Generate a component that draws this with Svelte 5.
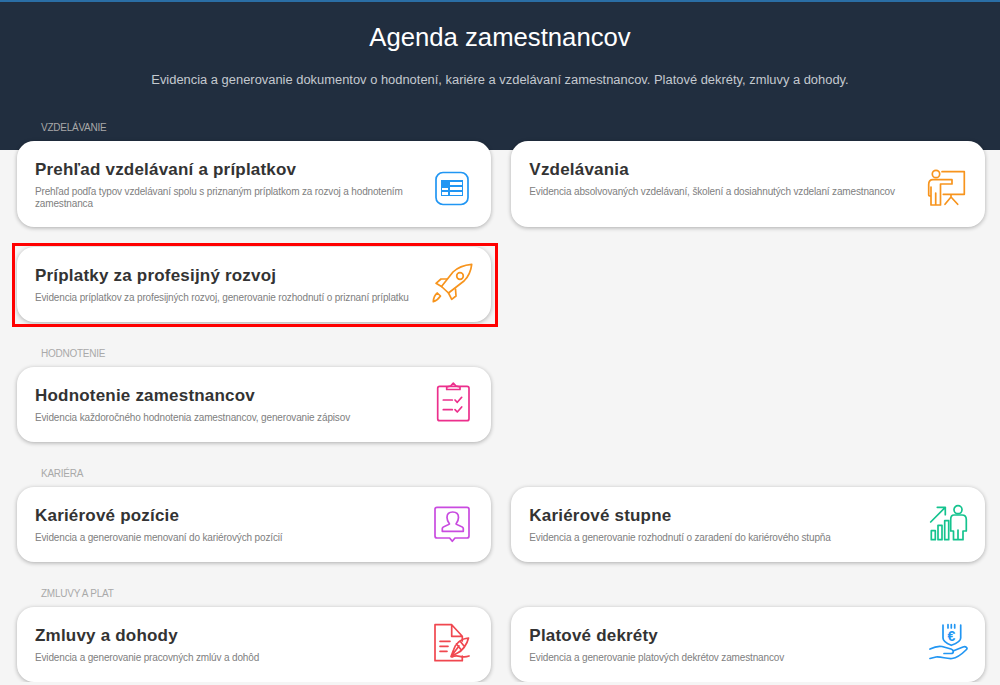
<script>
  const sections = [
    {
      label: 'VZDELÁVANIE',
      cards: [
        { title: 'Prehľad vzdelávaní a príplatkov', text: 'Prehľad podľa typov vzdelávaní spolu s priznaným príplatkom za rozvoj a hodnotením zamestnanca', icon: 'table' },
        { title: 'Vzdelávania', text: 'Evidencia absolvovaných vzdelávaní, školení a dosiahnutých vzdelaní zamestnancov', icon: 'teacher' },
        { title: 'Príplatky za profesijný rozvoj', text: 'Evidencia príplatkov za profesijných rozvoj, generovanie rozhodnutí o priznaní príplatku', icon: 'rocket', marked: true }
      ]
    },
    {
      label: 'HODNOTENIE',
      cards: [
        { title: 'Hodnotenie zamestnancov', text: 'Evidencia každoročného hodnotenia zamestnancov, generovanie zápisov', icon: 'clipboard' }
      ]
    },
    {
      label: 'KARIÉRA',
      cards: [
        { title: 'Kariérové pozície', text: 'Evidencia a generovanie menovaní do kariérových pozícií', icon: 'profile' },
        { title: 'Kariérové stupne', text: 'Evidencia a generovanie rozhodnutí o zaradení do kariérového stupňa', icon: 'growth' }
      ]
    },
    {
      label: 'ZMLUVY A PLAT',
      cards: [
        { title: 'Zmluvy a dohody', text: 'Evidencia a generovanie pracovných zmlúv a dohôd', icon: 'contract' },
        { title: 'Platové dekréty', text: 'Evidencia a generovanie platových dekrétov zamestnancov', icon: 'salary' }
      ]
    }
  ];
</script>

<header class="hero">
  <h1>Agenda zamestnancov</h1>
  <p>Evidencia a generovanie dokumentov o hodnotení, kariére a vzdelávaní zamestnancov. Platové dekréty, zmluvy a dohody.</p>
</header>

<main class="content">
  {#each sections as section}
    <section>
      <h2>{section.label}</h2>
      <div class="grid">
        {#each section.cards as card}
          <a class="card" class:marked={card.marked} href="#top">
            <div class="body">
              <h3>{card.title}</h3>
              <p>{card.text}</p>
            </div>
            <svg class="icon {card.icon}" viewBox="0 0 48 48" width="48" height="48" aria-hidden="true">
              {#if card.icon === 'table'}
                <rect x="8" y="7.5" width="32" height="32" rx="7" />
                <rect class="solid" x="13" y="15" width="22" height="16" />
                <path class="cut" d="M22 17h12v3H22zM22 22h12v3H22zM22 27h12v3H22zM14 23h6v2h-6zM14 27h6v3h-6z" />
              {:else if card.icon === 'teacher'}
                <circle cx="14" cy="9" r="3.7" />
                <path d="M20 6.7H42.3V29.3H21.3M29 29.3V32L23 39.3M29 32L35.7 39.3" />
                <path d="M30 14.7H11Q6.7 14.7 6.7 19.5V30Q6.7 31 9 31V40H18.5V19H30ZM13.7 28V40M9 22V31" />
              {:else if card.icon === 'rocket'}
                <path d="M43.7 4.3C36 5 29 8 25 12L13.5 26.5L20.5 33L36 21C40 17 43 11 43.7 4.3Z" />
                <circle cx="32" cy="16" r="3.3" />
                <path d="M18.7 19H13L8 23.3L13.5 26.5M27.5 29L28 36L23.7 39.3L20.5 33" />
                <path d="M5.3 41.7C5.5 38 6 35.5 9.3 33L12.5 36C10 39.5 8 41 5.3 41.7Z" />
              {:else if card.icon === 'clipboard'}
                <rect x="9.7" y="6.3" width="31.3" height="34.4" rx="2" />
                <path d="M18.7 9.5H32V7L28 6L25.3 3.2L22.6 6L18.7 7Z" />
                <path d="M15.3 20H24.3M15.3 29.7H24.3M27 20L29.3 22.3L33.7 17.3M27 29.7L29.3 32L33.7 27" />
              {:else if card.icon === 'profile'}
                <path d="M9 7.3H39Q41 7.3 41 9.3V36Q41 38 39 38H27L24.3 41.3L21.6 38H9Q7 38 7 36V9.3Q7 7.3 9 7.3Z" />
                <path d="M14.3 31.3V28.5C14.3 26 20 25.5 21.5 24C20 22 19 20 19 17.5C19 14 21 12 24.7 12C28.5 12 30.5 14 30.5 17.5C30.5 20 29.5 22 28 24C29.5 25.5 35.3 26 35.3 28.5V31.3Z" />
              {:else if card.icon === 'growth'}
                <path d="M9.3 30.7h4v9h-4zM16 25.3h4v14.4h-4zM22.7 20.7h4v19h-4z" />
                <path d="M8.7 22L23.3 7.3M15.3 7.3H23.3V14.7" />
                <circle cx="36" cy="9.7" r="4" />
                <path d="M32 15H40Q44.3 15 44.3 19.5V31H41V39.7H31.5V31H28.7V19.5Q28.7 15 32 15ZM36 30V39.7" />
              {:else if card.icon === 'contract'}
                <path d="M34.3 21V16.3L23.7 4.7H7V40.7H34.3V36M23.7 4.7V16.3H34.3" />
                <path d="M12 21.3H22M12 26.3H20M12 31.3H19" />
                <path d="M40.5 18C33 18.5 27 24 25.5 30L23 36.5L29.5 33C34 31 39 25 40.5 18ZM23 36.5L31 26M28.5 24L32.5 29M32 21L36 26" />
                <path d="M24 37C30 33.5 33 39 41 36" />
              {:else if card.icon === 'salary'}
                <path d="M21 5V18C21 22 26 24 29.3 25.3C33 24 38.7 22 38.7 18V5M26 4.7V8M29.3 4.7V8M32.7 4.7V8" />
                <text x="29.5" y="21" text-anchor="middle">€</text>
                <path d="M8 29C12 27 15 25.5 20 26.5L29 29C32 30 32 33.5 29 33.5H22M31 31L41 27C44 26 46 28 44.5 29.5C40 34 35 38 30 38.5C24 39 20 36.5 14 37L8 38.5" />
              {/if}
            </svg>
          </a>
        {/each}
      </div>
    </section>
  {/each}
</main>

<style>
  :global(body) {
    background: #f5f5f5;
    font-family: "Liberation Sans", Arial, sans-serif;
    overflow: hidden;
  }

  .hero {
    box-sizing: border-box;
    height: 150px;
    padding-top: 20px;
    background: #212e3f;
    border-top: 2px solid #2a6ea5;
    text-align: center;
    color: #fff;
  }

  h1 {
    margin: 0;
    font-size: 25.7px;
    font-weight: 400;
    line-height: 30px;
  }

  .hero p {
    margin: 19px 0 0;
    font-size: 12.92px;
    line-height: 18px;
    color: #c4c9cf;
  }

  .content {
    margin-top: -30px;
    padding: 0 14.7px 0 17px;
  }

  section + section {
    margin-top: 24px;
  }

  h2 {
    margin: 0 0 5px 24px;
    font-size: 10px;
    font-weight: 400;
    line-height: 16px;
    letter-spacing: -0.25px;
    color: #a9a9a9;
  }

  .grid {
    display: grid;
    grid-template-columns: 1fr 1fr;
    gap: 20px 20.4px;
  }

  .card {
    position: relative;
    display: flex;
    justify-content: space-between;
    min-height: 75px;
    box-sizing: border-box;
    background: #fff;
    border-radius: 17px;
    box-shadow: 0 1px 4px rgba(0, 0, 0, 0.3);
    text-decoration: none;
  }

  .marked::after {
    content: '';
    position: absolute;
    inset: -4px -7px -5px -5px;
    border: 3px solid #f00;
  }

  .body {
    flex: 1;
    padding: 19px 0 17px 18px;
  }

  h3 {
    margin: 0;
    font-size: 17px;
    line-height: 20px;
    color: #333;
    letter-spacing: 0.2px;
  }

  .body p {
    margin: 6px 0 0;
    font-size: 10px;
    line-height: 12px;
    letter-spacing: -0.15px;
    color: #808080;
  }

  .icon {
    flex: none;
    align-self: flex-end;
    margin: 0 15px 14px 10px;
    fill: none;
    stroke: currentColor;
    stroke-width: 1.7;
    stroke-linejoin: round;
    stroke-linecap: round;
  }

  .icon .solid {
    fill: currentColor;
    stroke: none;
  }

  .icon .cut {
    fill: #fff;
    stroke: none;
  }

  .icon text {
    fill: currentColor;
    stroke: none;
    font-size: 14px;
    font-weight: 700;
  }

  .table { color: #2196f3; }
  .teacher { color: #f7941d; }
  .rocket { color: #f7941d; }
  .clipboard { color: #ec2f8c; }
  .profile { color: #c94be0; }
  .growth { color: #14c38e; }
  .contract { color: #f0474f; }
  .salary { color: #2196f3; }
</style>
